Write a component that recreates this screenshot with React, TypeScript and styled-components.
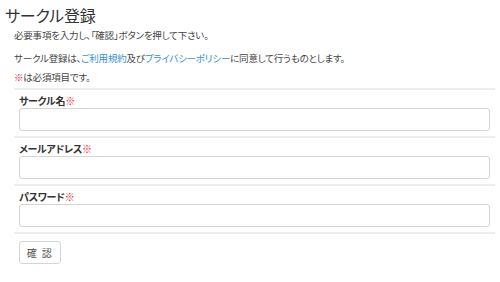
import React from 'react';
import styled, { createGlobalStyle } from 'styled-components';

const GlobalStyle = createGlobalStyle`
  html, body {
    margin: 0;
    padding: 0;
    background: #fff;
  }
  body {
    font-family: "Noto Sans CJK JP", "Noto Sans", sans-serif;
    color: #333;
    font-feature-settings: "palt";
  }
`;

const Page = styled.div`
  padding: 4px 5px 0 5px;
  width: 500px;
  box-sizing: border-box;
`;

const Title = styled.h1`
  margin: 0;
  font-size: 16px;
  font-weight: 400;
  line-height: 22px;
  letter-spacing: -0.2px;
  color: #333;
`;

const Body = styled.div`
  padding-left: 9px;
`;

const Note = styled.p<{ $gap: number }>`
  margin: ${({ $gap }) => $gap}px 0 0;
  font-size: 9.5px;
  line-height: 14px;
  letter-spacing: -0.2px;
  color: #444;
`;

const Link = styled.a`
  color: #3b8fd6;
  text-decoration: none;
`;

const Required = styled.span`
  color: #e8202a;
  font-weight: 700;
`;

const Form = styled.form`
  margin-top: 4px;
`;

const Row = styled.div`
  border-top: 2px solid #eeeeee;
  padding: 3px 5px 5px 5px;
  display: flex;
  flex-direction: column;
`;

const Label = styled.label`
  font-size: 10px;
  font-weight: 700;
  line-height: 15px;
  color: #333;
  letter-spacing: -0.3px;
`;

const Input = styled.input`
  box-sizing: border-box;
  height: 23px;
  width: 100%;
  border: 1px solid #d4d4d4;
  border-radius: 3px;
  background: #fff;
  padding: 0 6px;
  font-size: 11px;
  outline: none;
`;

const Actions = styled.div`
  border-top: 2px solid #eeeeee;
  padding: 4px 5px 0 5px;
`;

const Button = styled.button`
  box-sizing: border-box;
  width: 42px;
  height: 23px;
  border: 1px solid #d4d4d4;
  border-radius: 3px;
  background: #fff;
  color: #555;
  font-family: "Noto Sans CJK JP", sans-serif;
  font-size: 10px;
  padding: 0;
  letter-spacing: 1.5px;
`;

const fields = [
  { id: 'name', label: 'サークル名', type: 'text' },
  { id: 'mail', label: 'メールアドレス', type: 'email' },
  { id: 'pass', label: 'パスワード', type: 'password' },
];

export default function App() {
  return (
    <>
      <GlobalStyle />
      <Page>
        <Title>サークル登録</Title>
        <Body>
          <Note $gap={2}>必要事項を入力し、「確認」ボタンを押して下さい。</Note>
          <Note $gap={9}>
            サークル登録は、<Link href="#">ご利用規約</Link>及び
            <Link href="#">プライバシーポリシー</Link>に同意して行うものとします。
          </Note>
          <Note $gap={5}>
            <Required>※</Required>は必須項目です。
          </Note>
          <Form onSubmit={(e) => e.preventDefault()}>
            {fields.map((f) => (
              <Row key={f.id}>
                <Label htmlFor={f.id}>
                  {f.label}
                  <Required>※</Required>
                </Label>
                <Input id={f.id} type={f.type} />
              </Row>
            ))}
            <Actions>
              <Button type="submit">確 認</Button>
            </Actions>
          </Form>
        </Body>
      </Page>
    </>
  );
}
